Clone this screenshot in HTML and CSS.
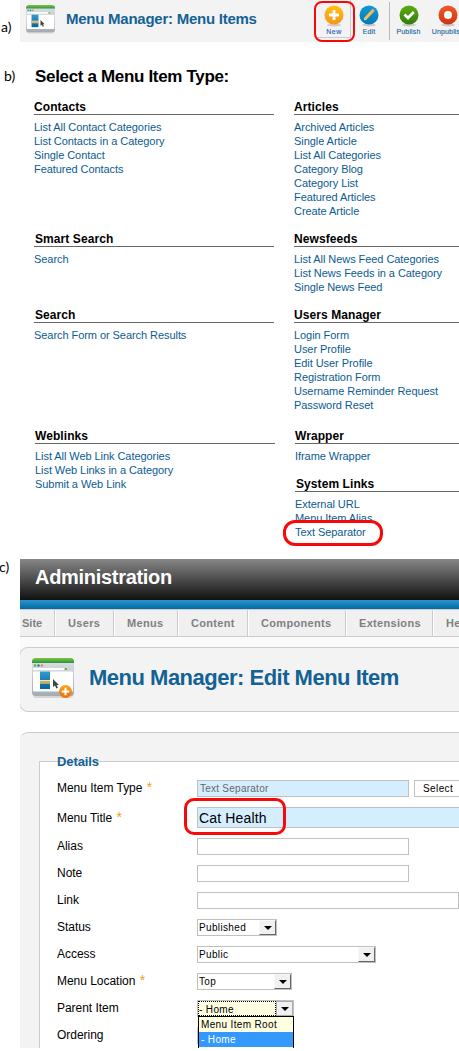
FILE: index.html
```html
<!DOCTYPE html>
<html lang="en">
<head>
<meta charset="utf-8">
<title>Menu Manager</title>
<link rel="stylesheet" href="styles.css">
</head>
<body>
<svg width="0" height="0" class="defs">
  <defs>
    <linearGradient id="green" x1="0" y1="0" x2="0" y2="1"><stop offset="0" stop-color="#82c341"/><stop offset="1" stop-color="#26963c"/></linearGradient>
    <linearGradient id="blue" x1="0" y1="0" x2="0" y2="1"><stop offset="0" stop-color="#2e9bd2"/><stop offset="1" stop-color="#05659c"/></linearGradient>
    <linearGradient id="orange" x1="0" y1="0" x2="0" y2="1"><stop offset="0" stop-color="#ffc20e"/><stop offset="1" stop-color="#f7931d"/></linearGradient>
    <linearGradient id="badge" x1="0" y1="0" x2="0" y2="1"><stop offset="0" stop-color="#fba51c"/><stop offset="1" stop-color="#ef6c0c"/></linearGradient>
    <linearGradient id="sky" x1="0" y1="0" x2="0" y2="1"><stop offset="0" stop-color="#0f9bd7"/><stop offset="1" stop-color="#0878b5"/></linearGradient>
    <linearGradient id="leaf" x1="0" y1="0" x2="0" y2="1"><stop offset="0" stop-color="#5fab0f"/><stop offset="1" stop-color="#2f7d0e"/></linearGradient>
    <linearGradient id="red" x1="0" y1="0" x2="0" y2="1"><stop offset="0" stop-color="#f4582c"/><stop offset="1" stop-color="#cc3411"/></linearGradient>
    <linearGradient id="frame" x1="0" y1="0" x2="0" y2="1"><stop offset="0" stop-color="#dfe3e8"/><stop offset="1" stop-color="#a3abb3"/></linearGradient>
    <symbol id="window" viewBox="0 0 42 42">
      <rect x="1" y="34" width="40" height="6" rx="3" fill="#000" opacity=".12"/>
      <rect x="0" y="1" width="42" height="37" rx="3.500" fill="url(#frame)"/>
      <path d="M0 5V3.500Q0 0 3.500 0H38.500Q42 0 42 3.500V5Z" fill="url(#green)"/>
      <circle cx="3" cy="7.500" r="1.300" fill="#6cae3c"/><circle cx="6.500" cy="7.500" r="1.300" fill="#1e86c0"/><circle cx="10" cy="7.500" r="1.300" fill="#f08a3c"/>
      <rect x="1" y="10" width="31" height="2.200" fill="#fff"/>
      <rect x="33" y="10" width="2" height="2" fill="#74b030"/>
      <rect x="1" y="13.500" width="40" height="20" rx="1" fill="#fff"/>
      <rect x="8" y="13.500" width="10" height="17.500" fill="url(#blue)"/>
      <rect x="8" y="22" width="10" height="3.500" fill="#cfe8f4"/>
      <rect x="8" y="23" width="10" height="2" fill="#f9a51a"/>
      <path d="M21 21V29L23 27.500L24.300 30.500L26 29.700L24.600 27H27Z" fill="#444"/>
    </symbol>
  </defs>
</svg>

<section class="step step-a">
  <span class="marker marker-a">a)</span>
  <header class="toolbar">
    <svg class="toolbar-icon" width="29" height="30" viewBox="0 0 42 42" preserveAspectRatio="none"><use href="#window"/></svg>
    <h2 class="toolbar-title">Menu Manager: Menu Items</h2>
    <div class="tool tool-new">
      <svg width="20" height="22" viewBox="0 0 20 22"><ellipse cx="10" cy="20" rx="7" ry="1.500" fill="#ccc"/><circle cx="10" cy="10" r="9.500" fill="url(#orange)"/><path d="M10 5V15M5 10H15" stroke="#fff" stroke-width="2.800"/></svg>
      <span class="tool-label label-new">New</span>
    </div>
    <div class="tool tool-edit">
      <svg width="20" height="22" viewBox="0 0 20 22"><ellipse cx="10" cy="20" rx="7" ry="1.500" fill="#ccc"/><circle cx="10" cy="10" r="9.500" fill="url(#sky)"/><path d="M6.500 13.500L13.500 6" stroke="#f6c344" stroke-width="3"/><path d="M12.800 6.800L14.800 4.700" stroke="#f0a68d" stroke-width="3"/><path d="M5 15.300L5.500 12.500L7.600 14.500Z" fill="#f5e6c8"/></svg>
      <span class="tool-label">Edit</span>
    </div>
    <div class="tool tool-publish">
      <svg width="20" height="22" viewBox="0 0 20 22"><ellipse cx="10" cy="20" rx="7" ry="1.500" fill="#ccc"/><circle cx="10" cy="10" r="9.500" fill="url(#leaf)"/><path d="M5.500 9.500L9 13L14.800 7" stroke="#fff" stroke-width="2.800" fill="none"/></svg>
      <span class="tool-label">Publish</span>
    </div>
    <div class="tool tool-unpublish">
      <svg width="20" height="22" viewBox="0 0 20 22"><ellipse cx="10" cy="20" rx="7" ry="1.500" fill="#ccc"/><circle cx="10" cy="10" r="9.500" fill="url(#red)"/><circle cx="10" cy="10" r="4" fill="#fff"/></svg>
      <span class="tool-label">Unpublish</span>
    </div>
  </header>
  <div class="ring ring-new"></div>
</section>

<section class="step step-b">
  <span class="marker marker-b">b)</span>
  <h1 class="picker-title">Select a Menu Item Type:</h1>
  <div class="types">
    <div class="group"><h3>Contacts</h3><ul><li>List All Contact Categories</li><li>List Contacts in a Category</li><li>Single Contact</li><li>Featured Contacts</li></ul></div>
    <div class="group"><h3>Articles</h3><ul><li>Archived Articles</li><li>Single Article</li><li>List All Categories</li><li>Category Blog</li><li>Category List</li><li>Featured Articles</li><li>Create Article</li></ul></div>
    <div class="group nudge-head"><h3>Smart Search</h3><ul><li>Search</li></ul></div>
    <div class="group"><h3>Newsfeeds</h3><ul><li>List All News Feed Categories</li><li>List News Feeds in a Category</li><li>Single News Feed</li></ul></div>
    <div class="group nudge-head"><h3>Search</h3><ul><li>Search Form or Search Results</li></ul></div>
    <div class="group"><h3>Users Manager</h3><ul><li>Login Form</li><li>User Profile</li><li>Edit User Profile</li><li>Registration Form</li><li>Username Reminder Request</li><li>Password Reset</li></ul></div>
    <div class="group shifted"><h3>Weblinks</h3><ul><li>List All Web Link Categories</li><li>List Web Links in a Category</li><li>Submit a Web Link</li></ul></div>
    <div class="stack">
      <div class="group shifted wrapper-group"><h3>Wrapper</h3><ul><li>Iframe Wrapper</li></ul></div>
      <div class="group shifted nudge-head"><h3>System Links</h3><ul><li>External URL</li><li>Menu Item Alias</li><li class="picked">Text Separator<span class="ring ring-separator"></span></li></ul></div>
    </div>
  </div>
</section>

<section class="step step-c">
  <span class="marker marker-c">c)</span>
  <div class="admin">
    <div class="admin-head">Administration</div>
    <div class="admin-stripe"></div>
    <nav class="nav"><span class="nav-site">Site</span><span class="nav-users">Users</span><span class="nav-menus">Menus</span><span class="nav-content">Content</span><span class="nav-components">Components</span><span class="nav-extensions">Extensions</span><span class="nav-help">Help</span></nav>
    <div class="title-area">
      <div class="title-box">
        <svg class="title-icon" width="43" height="42" viewBox="0 0 43 42"><use href="#window" width="42" height="42"/><circle cx="33.500" cy="33.500" r="6.500" fill="url(#badge)"/><path d="M33.500 29.700V37.300M29.700 33.500H37.300" stroke="#fff" stroke-width="2"/></svg>
        <h2 class="edit-title">Menu Manager: Edit Menu Item</h2>
      </div>
    </div>
    <div class="panel">
      <div class="details">
        <div class="legend">Details</div>
        <div class="row row-type"><label>Menu Item Type <i>*</i></label><div class="field required readonly">Text Separator</div><div class="button">Select</div></div>
        <div class="row row-title"><label>Menu Title <i>*</i></label><div class="field required title-field">Cat Health<span class="ring ring-title"></span></div></div>
        <div class="row"><label>Alias</label><div class="field"></div></div>
        <div class="row"><label>Note</label><div class="field"></div></div>
        <div class="row"><label>Link</label><div class="field link-field"></div></div>
        <div class="row"><label>Status</label><div class="select sel-status">Published<b></b></div></div>
        <div class="row"><label>Access</label><div class="select sel-access">Public<b></b></div></div>
        <div class="row row-location"><label>Menu Location <i>*</i></label><div class="select sel-location">Top<b></b></div></div>
        <div class="row"><label>Parent Item</label><div class="select sel-parent"><em>- Home</em><b></b>
          <div class="options"><div>Menu Item Root</div><div class="active">- Home</div></div></div></div>
        <div class="row row-last"><label>Ordering</label><div class="select sel-ordering"></div></div>
      </div>
    </div>
  </div>
</section>
</body>
</html>
```

FILE: styles.css
```css
* { box-sizing: border-box; }
body { margin: 0; width: 459px; height: 1051px; overflow: hidden; background: #fff; font-family: "Liberation Sans", Arial, sans-serif; color: #000; }
h1, h2, h3, ul { margin: 0; padding: 0; }
ul { list-style: none; }
i, em { font-style: normal; }
.defs { position: absolute; }
.step { display: flex; position: relative; }
.marker { flex: none; font: 14px/16px Lato, sans-serif; }
.ring { position: absolute; border: 3px solid #f80808; }

/* Item list toolbar */
.step-a { height: 42px; }
.marker-a { width: 20px; padding: 19px 0 0 1px; }
.toolbar { flex: 1; min-width: 0; display: flex; background: #f3f3f3; overflow: hidden; }
.toolbar-icon { flex: none; margin: 5px 0 0 6px; }
.toolbar-title { flex: none; width: 260px; padding: 10px 0 0 11px; font-size: 15px; line-height: 18px; letter-spacing: -.25px; color: #146295; white-space: nowrap; }
.tool { flex: none; display: flex; flex-direction: column; align-items: center; padding-top: 5px; }
.tool svg { display: block; }
.tool-label { font-size: 7px; line-height: 9px; letter-spacing: .15px; color: #146295; -webkit-text-stroke: .1px #146295; }
.label-new { color: #1c54d0; letter-spacing: .5px; }
.tool-new { width: 36px; height: 38px; border-right: 1px solid #ccc; border-bottom: 1px solid #ccc; padding-left: 3px; }
.tool-edit { width: 36px; }
.tool-publish { width: 38px; margin: 2px 0 2px 2px; padding-top: 3px; border-left: 1px solid #bbb; }
.tool-unpublish { width: 42px; }
.ring-new { left: 314px; top: 1px; width: 41px; height: 41px; border-width: 2px; border-radius: 8px; }

/* Type chooser */
.step-b { height: 517px; flex-wrap: wrap; align-content: flex-start; }
.marker-b { width: 34px; padding: 26px 0 0 4px; }
.picker-title { width: 400px; height: 56px; padding: 24px 0 0 1px; font-size: 17px; line-height: 22px; letter-spacing: -.33px; white-space: nowrap; }
.types { margin-left: 34px; display: grid; grid-template-columns: 240px 165px; column-gap: 20px; grid-template-rows: 132px 76px 121px 132px; width: 425px; }
.group h3 { height: 17px; border-bottom: 1px solid #666; font-size: 12px; line-height: 19px; letter-spacing: .08px; white-space: nowrap; }
.group ul { padding-top: 5px; }
.group li { font-size: 11px; line-height: 14px; letter-spacing: -.06px; color: #0b5b91; white-space: nowrap; }
.nudge-head h3 { text-indent: 1px; }
.shifted h3, .shifted ul { margin-left: 1px; margin-right: -1px; }
.wrapper-group { height: 48px; }
.picked { position: relative; }
.ring-separator { left: -12px; top: -5px; width: 100px; height: 26px; border-radius: 12px; }

/* Administration screen */
.step-c { height: 489px; }
.marker-c { width: 20px; text-indent: -1px; }
.admin { flex: none; width: 439px; overflow: hidden; }
.admin-head { height: 41px; padding: 6px 0 0 15px; font-size: 20px; line-height: 24px; font-weight: bold; letter-spacing: -.3px; color: #fff; background: linear-gradient(#878787, #101010); }
.admin-stripe { height: 9px; background: linear-gradient(#2894cc, #0369a3); }
.nav { display: flex; height: 28px; border-top: 1px solid #ccc; border-bottom: 1px solid #ccc; background: #f0f0f0; font-size: 11px; line-height: 26px; font-weight: bold; letter-spacing: .32px; color: #808080; }
.nav span { flex: none; border-right: 1px solid #ccc; box-shadow: 1px 0 #fff; padding-left: 13px; }
.nav .nav-site { width: 35px; padding-left: 2px; letter-spacing: 0; }
.nav-users { width: 59px; }
.nav-menus { width: 64px; }
.nav-content { width: 70px; }
.nav-components { width: 98px; }
.nav-extensions { width: 87px; }
.nav-help { width: 50px; }
.title-area { height: 75px; padding-top: 10px; background: #fafafa; }
.title-box { display: flex; width: 460px; height: 65px; margin-left: -1px; border: 1px solid #ccc; border-radius: 9px; background: #f3f3f3; }
.title-icon { flex: none; margin: 10px 0 0 12px; }
.edit-title { padding: 17px 0 0 14px; font-size: 22px; line-height: 26px; letter-spacing: -.5px; color: #146295; white-space: nowrap; }
.panel { width: 460px; height: 316px; margin: 20px 0 0 -1px; padding: 28px 0 0 19px; border: 1px solid #ccc; border-bottom: 0; border-left-color: #eee; border-radius: 9px 0 0 0; background: #f3f3f3; }
.details { height: 287px; border: 1px solid #ccc; border-bottom: 0; background: #fff; padding-left: 17px; }
.legend { width: 45px; height: 18px; margin-top: -9px; font-size: 13px; line-height: 18px; font-weight: bold; letter-spacing: -.1px; color: #146295; }
.row { display: flex; height: 27px; }
.row-type { margin-top: 9px; }
.row-title { height: 31px; }
.row label { flex: none; width: 140px; font-size: 12px; line-height: 16px; letter-spacing: -.03px; }
.row label i { color: #f39b26; font-size: 14px; line-height: 10px; margin-left: 1px; }
.row-title label { padding-top: 3px; }
.field { flex: none; position: relative; width: 212px; height: 17px; border: 1px solid #c0c0c0; background: #fff; }
.required { background: #d5eeff; }
.readonly { padding-left: 2px; font-size: 10px; line-height: 16px; letter-spacing: .25px; color: #666; }
.button { margin-left: 5px; width: 60px; height: 17px; border: 1px solid #c0c0c0; padding-left: 8px; font-size: 10px; line-height: 16px; letter-spacing: .4px; }
.title-field { width: 290px; height: 21px; padding-left: 1px; font-size: 14px; line-height: 20px; letter-spacing: .15px; }
.ring-title { left: -14px; top: -10px; width: 102px; height: 37px; border-radius: 10px; }
.link-field { width: 262px; }
.select { position: relative; display: flex; justify-content: space-between; height: 17px; border: 1px solid #c0c0c0; padding-left: 1px; background: #fff; font-size: 10px; line-height: 16px; letter-spacing: .35px; }
.select b { width: 17px; height: 15px; padding: 5px 0 0 4px; background: #f0f0f0; border: 1px solid #f8f8f8; border-right: 1px solid #666; border-bottom: 1px solid #666; }
.select b::before { content: ""; display: block; width: 0; border: 4px solid transparent; border-top-color: #000; border-bottom: 0; }
.sel-status { width: 80px; }
.sel-access { width: 179px; }
.sel-location { width: 95px; }
.sel-parent { width: 97px; padding-left: 0; }
.sel-parent em { flex: 1; border: 1px dotted #000; background: #ffffe1; line-height: 15px; }
.sel-parent b { border: 1px solid #aaa; }
.sel-ordering { width: 50px; }
.options { position: absolute; z-index: 1; left: 0; top: 15px; width: 96px; height: 34px; border: 1px solid #000; border-bottom: 0; background: #ffffe1; line-height: 16px; }
.options div { height: 15px; padding-left: 2px; white-space: nowrap; }
.options .active { background: #3399ff; color: #fff; }
```
